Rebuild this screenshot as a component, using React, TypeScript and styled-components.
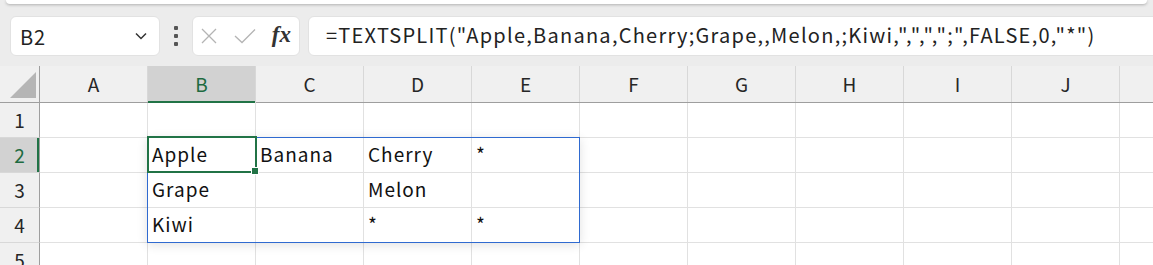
import styled, { createGlobalStyle } from "styled-components"

const COLS = ["A", "B", "C", "D", "E", "F", "G", "H", "I", "J", "K"]
const ROWS = [1, 2, 3, 4, 5]
const DATA: Record<string, string> = {
  B2: "Apple", C2: "Banana", D2: "Cherry", E2: "*",
  B3: "Grape", D3: "Melon",
  B4: "Kiwi", D4: "*", E4: "*",
}
const FORMULA = '=TEXTSPLIT("Apple,Banana,Cherry;Grape,,Melon,;Kiwi,",",",";",FALSE,0,"*")'

const GlobalStyle = createGlobalStyle`
  html, body {
    margin: 0;
    padding: 0;
    background: #ececec;
    overflow: hidden;
    font-family: "Noto Sans CJK JP", "Noto Sans", sans-serif;
  }
`

const App = () => {
  return (
    <>
      <GlobalStyle />
      <Page>
        <RibbonEdge />
        <FormulaBar>
          <NameBox>
            <span>B2</span>
            <svg width="16" height="16" viewBox="0 0 16 16">
              <path d="M3 5.5 L8 10.5 L13 5.5" fill="none" stroke="#333" strokeWidth="1.5" />
            </svg>
          </NameBox>
          <Grip>
            <i /><i /><i />
          </Grip>
          <FxBox>
            <svg width="20" height="20" viewBox="0 0 20 20">
              <path d="M3 3 L17 17 M17 3 L3 17" stroke="#b4b4b4" strokeWidth="1.3" />
            </svg>
            <svg width="24" height="20" viewBox="0 0 24 20">
              <path d="M2 10 L9 16.5 L22 3.5" fill="none" stroke="#b4b4b4" strokeWidth="1.3" />
            </svg>
            <FxLabel>fx</FxLabel>
          </FxBox>
          <FormulaInput>{FORMULA}</FormulaInput>
        </FormulaBar>

        <Sheet>
          <HeaderRow>
            <Corner>
              <svg width="28" height="28" viewBox="0 0 28 28">
                <path d="M27 1 L27 27 L1 27 Z" fill="#b5b5b5" />
              </svg>
            </Corner>
            {COLS.map(c => (
              <ColHead key={c} $active={c === "B"}>{c}</ColHead>
            ))}
          </HeaderRow>
          {ROWS.map(r => (
            <Row key={r}>
              <RowHead $active={r === 2}>{r}</RowHead>
              {COLS.map(c => (
                <Cell key={c}>{DATA[`${c}${r}`] ?? ""}</Cell>
              ))}
            </Row>
          ))}
          <SpillBorder />
          <ActiveCell>
            <FillHandle />
          </ActiveCell>
        </Sheet>
      </Page>
    </>
  )
}

export default App

const Page = styled.div`
  width: 1153px;
  display: flex;
  flex-direction: column;

  & > * {
    flex: none;
  }
`

const RibbonEdge = styled.div`
  height: 4px;
  margin: 0 6px;
  background: #fff;
  border-radius: 0 0 8px 8px;
  box-shadow: 0 1px 3px rgba(0, 0, 0, 0.25);
`

const FormulaBar = styled.div`
  display: flex;
  align-items: center;
  height: 40px;
  margin-top: 12px;
  padding-left: 10px;
`

const Box = styled.div`
  height: 40px;
  box-sizing: border-box;
  background: #fff;
  border-radius: 6px;
  border: 1px solid #e2e2e2;
  display: flex;
  align-items: center;
`

const NameBox = styled(Box)`
  width: 150px;
  padding: 0 10px 0 9px;
  justify-content: space-between;
  font-size: 20px;
  letter-spacing: 0.8px;
  color: #222;
`

const Grip = styled.div`
  width: 32px;
  display: flex;
  flex-direction: column;
  align-items: center;
  gap: 4px;

  i {
    width: 4px;
    height: 4px;
    border-radius: 1px;
    background: #555;
  }
`

const FxBox = styled(Box)`
  width: 108px;
  padding: 0 8px 0 6px;
  justify-content: space-between;
`

const FxLabel = styled.span`
  font-family: "Liberation Serif", serif;
  font-style: italic;
  font-weight: bold;
  font-size: 23px;
  color: #333;
  margin-bottom: 3px;
`

const FormulaInput = styled(Box)`
  flex: 1;
  margin-left: 8px;
  margin-right: -10px;
  padding: 0 0 3px 17px;
  font-size: 20px;
  letter-spacing: 1.25px;
  color: #222;
  white-space: nowrap;
  overflow: hidden;
`

const Sheet = styled.div`
  position: relative;
  margin-top: 10px;
  background: #fff;
`

const HeaderRow = styled.div`
  display: flex;
  height: 36px;
  background: #f0f0f0;
  border-bottom: 1px solid #9e9e9e;
`

const Corner = styled.div`
  width: 40px;
  flex: none;
  box-sizing: border-box;
  border-right: 1px solid #9e9e9e;
  display: flex;
  align-items: flex-end;
  justify-content: flex-end;
  padding: 0 2px 3px 0;
`

const ColHead = styled.div<{ $active?: boolean }>`
  width: 108px;
  flex: none;
  box-sizing: border-box;
  border-right: 1px solid #d8d8d8;
  display: flex;
  align-items: center;
  justify-content: center;
  font-size: 19px;
  padding-bottom: 2px;
  color: ${p => (p.$active ? "#1e6b41" : "#262626")};
  background: ${p => (p.$active ? "#d2d2d2" : "transparent")};
  box-shadow: ${p => (p.$active ? "inset 0 -2px 0 #217346" : "none")};
  margin-bottom: ${p => (p.$active ? "-1px" : "0")};
`

const Row = styled.div`
  display: flex;
  height: 35px;
`

const RowHead = styled.div<{ $active?: boolean }>`
  width: 40px;
  flex: none;
  box-sizing: border-box;
  border-right: 1px solid #9e9e9e;
  border-bottom: 1px solid #d8d8d8;
  display: flex;
  align-items: center;
  justify-content: center;
  font-size: 19px;
  padding-bottom: 2px;
  color: ${p => (p.$active ? "#1e6b41" : "#262626")};
  background: ${p => (p.$active ? "#d2d2d2" : "#f0f0f0")};
  box-shadow: ${p => (p.$active ? "inset -2px 0 0 #217346" : "none")};
`

const Cell = styled.div`
  width: 108px;
  flex: none;
  box-sizing: border-box;
  border-right: 1px solid #e1e1e1;
  border-bottom: 1px solid #e1e1e1;
  padding: 0 4px 3px 4px;
  display: flex;
  align-items: flex-end;
  font-size: 19px;
  letter-spacing: 1px;
  line-height: 30px;
  color: #111;
  white-space: nowrap;
`

const SpillBorder = styled.div`
  position: absolute;
  left: 147px;
  top: 71px;
  width: 433px;
  height: 106px;
  box-sizing: border-box;
  border: 1px solid #2f6ad0;
  box-shadow: 0 2px 10px rgba(0, 0, 0, 0.12);
  pointer-events: none;
`

const ActiveCell = styled.div`
  position: absolute;
  left: 147px;
  top: 70px;
  width: 110px;
  height: 37px;
  box-sizing: border-box;
  border: 2px solid #217346;
`

const FillHandle = styled.div`
  position: absolute;
  right: -4px;
  bottom: -4px;
  width: 6px;
  height: 6px;
  background: #217346;
  border: 1px solid #fff;
`
